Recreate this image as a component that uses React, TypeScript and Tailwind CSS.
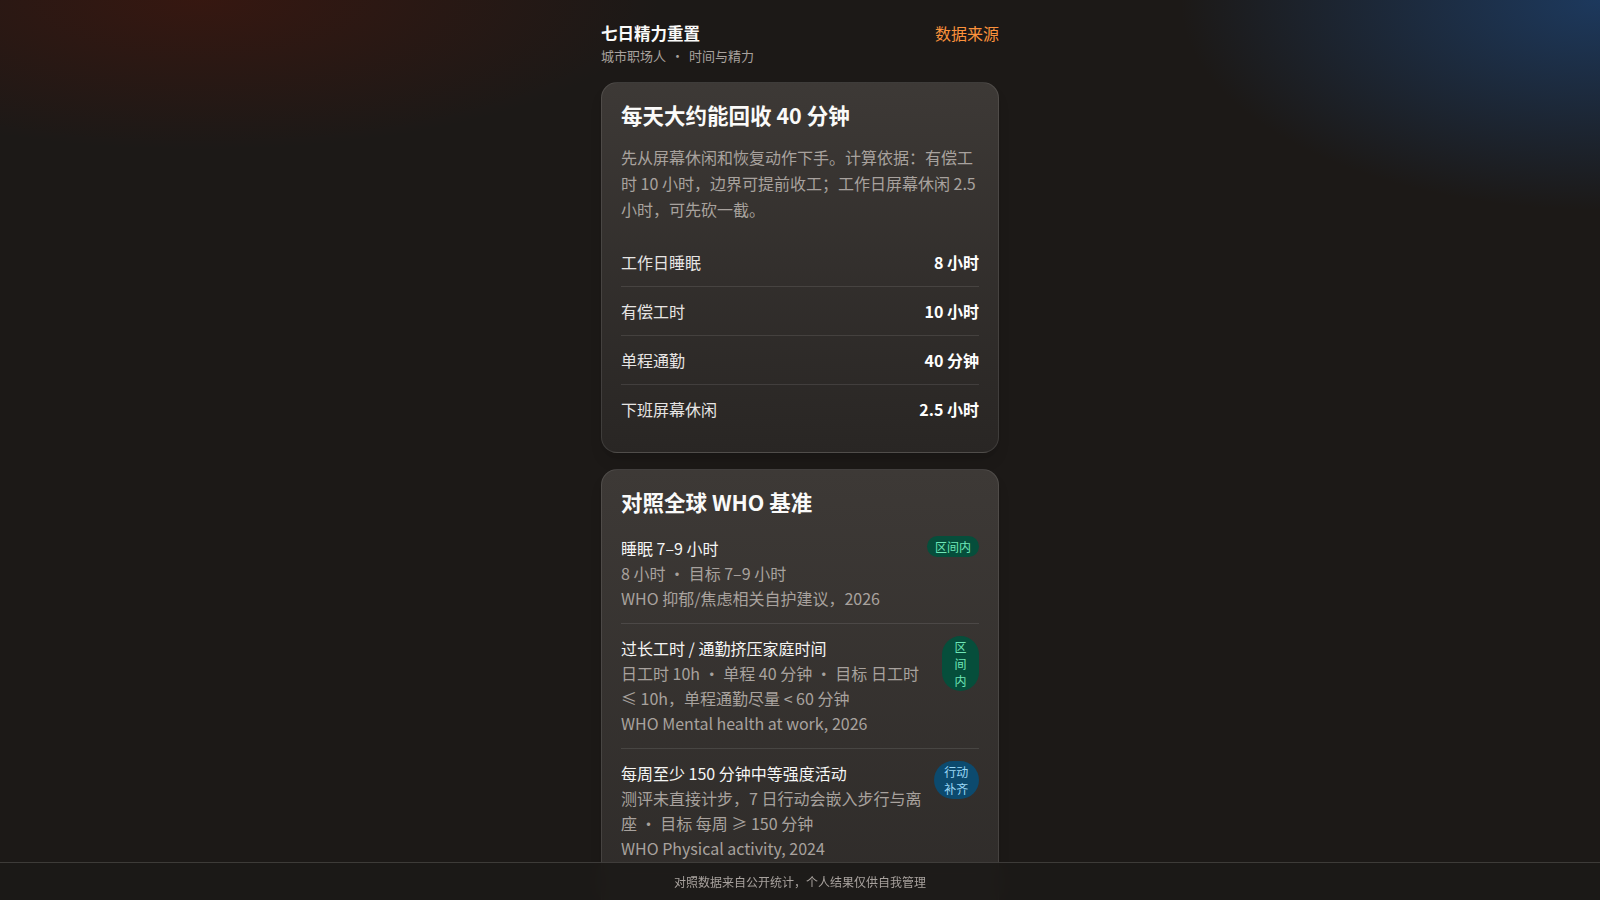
import React from "react";

const font = { fontFamily: '"Noto Sans CJK SC", "Noto Sans", sans-serif' };

const stats = [
  { label: "工作日睡眠", value: "8 小时" },
  { label: "有偿工时", value: "10 小时" },
  { label: "单程通勤", value: "40 分钟" },
  { label: "下班屏幕休闲", value: "2.5 小时" },
];

type Tone = "ok" | "act";

const checks: {
  title: string;
  meta: string[];
  source: string;
  badge: string;
  tone: Tone;
}[] = [
  {
    title: "睡眠 7–9 小时",
    meta: ["8 小时", "目标 7–9 小时"],
    source: "WHO 抑郁/焦虑相关自护建议，2026",
    badge: "区间内",
    tone: "ok",
  },
  {
    title: "过长工时 / 通勤挤压家庭时间",
    meta: ["日工时 10h", "单程 40 分钟", "目标 日工时 ≤ 10h，单程通勤尽量 < 60 分钟"],
    source: "WHO Mental health at work, 2026",
    badge: "区间内",
    tone: "ok",
  },
  {
    title: "每周至少 150 分钟中等强度活动",
    meta: ["测评未直接计步，7 日行动会嵌入步行与离座", "目标 每周 ≥ 150 分钟"],
    source: "WHO Physical activity, 2024",
    badge: "行动补齐",
    tone: "act",
  },
];

const Badge = ({ text, tone }: { text: string; tone: Tone }) => (
  <span
    className={
      tone === "ok"
        ? "rounded-full bg-[#064e3b] px-2 py-[2px] text-center text-xs leading-[17px] text-[#6ee7b7]"
        : "rounded-full bg-[#0c4a6e] px-2 py-[2px] text-center text-xs leading-[17px] text-[#9bd9f7]"
    }
  >
    {text}
  </span>
);

const Meta = ({ parts }: { parts: string[] }) => (
  <p className="text-base leading-[25px] text-[#a8a29e]">
    {parts.map((p, i) => (
      <React.Fragment key={i}>
        {i > 0 && " · "}
        {p}
      </React.Fragment>
    ))}
  </p>
);

export default function App() {
  return (
    <div
      style={font}
      className="min-h-screen bg-[#1c1917] bg-[radial-gradient(ellipse_460px_150px_at_200px_0px,rgba(100,20,5,0.36),transparent),radial-gradient(ellipse_420px_210px_at_100%_0%,rgba(29,78,140,0.6),transparent)] pb-16"
    >
      <div className="mx-auto w-[398px] pt-[19px]">
        <header className="mb-[17px] flex items-start justify-between">
          <div>
            <h1 className="text-[16.5px] font-bold leading-7 text-[#fafaf9]">七日精力重置</h1>
            <p className="text-[13px] leading-[18px] text-[#a8a29e]">
              城市职场人<span className="mx-[5px]">・</span>时间与精力
            </p>
          </div>
          <a className="text-base leading-7 text-[#fb923c]">数据来源</a>
        </header>

        <section className="rounded-2xl border border-white/10 bg-gradient-to-b from-[#3d3936] to-[#292624] p-[19px] shadow-lg">
          <h2 className="text-[21.5px] font-bold leading-[26px] text-[#fafaf9]">每天大约能回收 40 分钟</h2>
          <p className="mt-4 text-base leading-[26px] text-[#a8a29e]">
            先从屏幕休闲和恢复动作下手。计算依据：有偿工时 10 小时，边界可提前收工；工作日屏幕休闲 2.5 小时，可先砍一截。
          </p>
          <div className="mt-4 divide-y divide-white/10">
            {stats.map((s) => (
              <div key={s.label} className="flex items-center justify-between py-3 text-base leading-6">
                <span className="text-[#e7e5e4]">{s.label}</span>
                <span className="font-bold text-white">{s.value}</span>
              </div>
            ))}
          </div>
        </section>

        <section className="mt-4 rounded-2xl border border-white/10 bg-gradient-to-b from-[#3d3936] to-[#2c2927] p-[19px] shadow-lg">
          <h2 className="text-[21.5px] font-bold leading-[26px] text-[#fafaf9]">对照全球 WHO 基准</h2>
          <div className="mt-[9px]">
            {checks.map((c) => (
              <div key={c.title} className="flex items-start justify-between gap-3 border-b border-white/10 py-3">
                <div>
                  <p className="text-base leading-[25px] text-[#f5f5f4]">{c.title}</p>
                  <Meta parts={c.meta} />
                  <p className="text-base leading-[25px] text-[#a8a29e]">{c.source}</p>
                </div>
                <Badge text={c.badge} tone={c.tone} />
              </div>
            ))}
            <div className="h-24" />
          </div>
        </section>
      </div>

      <footer className="fixed inset-x-0 bottom-0 border-t border-white/15 bg-[#1c1917]/90 py-[10px] text-center text-xs leading-[17px] text-[#a8a29e] backdrop-blur">
        对照数据来自公开统计，个人结果仅供自我管理
      </footer>
    </div>
  );
}
